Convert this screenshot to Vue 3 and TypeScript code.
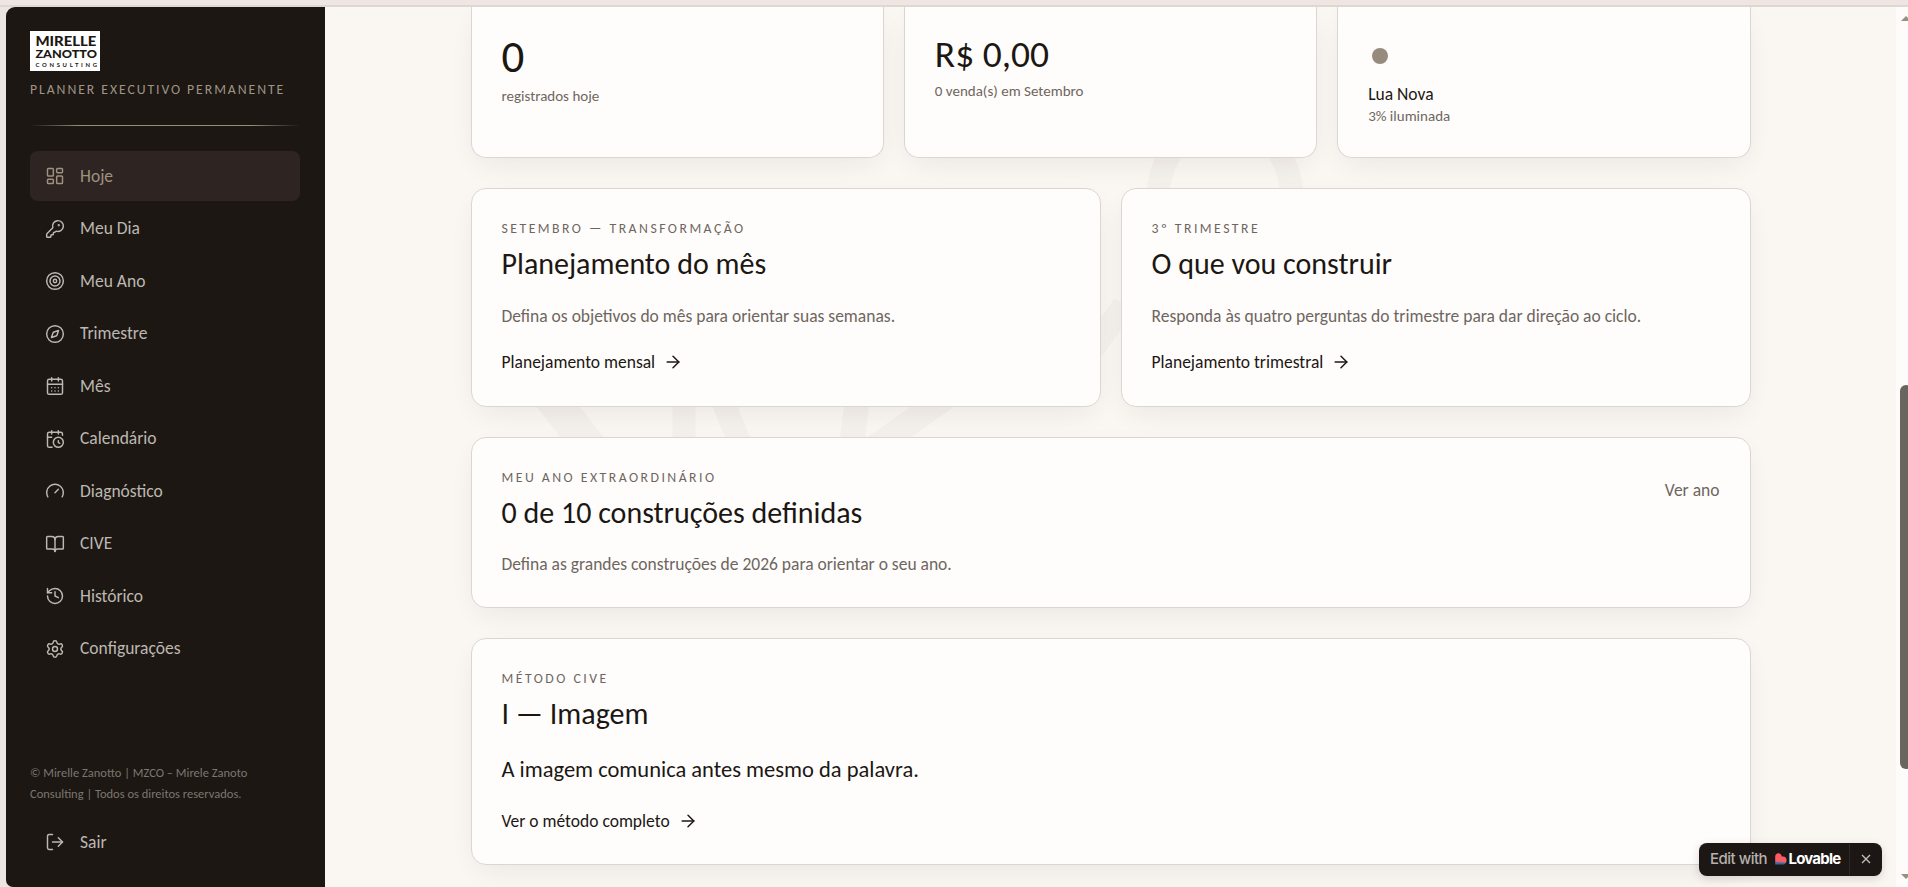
<script setup lang="ts">
interface NavItem {
  label: string
  icon: string
  active?: boolean
}

interface Plan {
  eyebrow: string
  title: string
  text: string
  link: string
}

const icons: Record<string, string> = {
  dashboard:
    '<rect width="7" height="9" x="3" y="3" rx="1"/><rect width="7" height="5" x="14" y="3" rx="1"/><rect width="7" height="9" x="14" y="12" rx="1"/><rect width="7" height="5" x="3" y="16" rx="1"/>',
  key: '<path d="M2.586 17.414A2 2 0 0 0 2 18.828V21a1 1 0 0 0 1 1h3a1 1 0 0 0 1-1v-1a1 1 0 0 1 1-1h1a1 1 0 0 0 1-1v-1a1 1 0 0 1 1-1h.172a2 2 0 0 0 1.414-.586l.814-.814a6.5 6.5 0 1 0-4-4z"/><circle cx="16.5" cy="7.5" r=".5" fill="currentColor"/>',
  target: '<circle cx="12" cy="12" r="10"/><circle cx="12" cy="12" r="6"/><circle cx="12" cy="12" r="2"/>',
  compass:
    '<path d="m16.24 7.76-1.804 5.411a2 2 0 0 1-1.265 1.265L7.76 16.24l1.804-5.411a2 2 0 0 1 1.265-1.265z"/><circle cx="12" cy="12" r="10"/>',
  calendar:
    '<path d="M8 2v4"/><path d="M16 2v4"/><rect width="18" height="18" x="3" y="4" rx="2"/><path d="M3 10h18"/><path d="M8 14h.01"/><path d="M12 14h.01"/><path d="M16 14h.01"/><path d="M8 18h.01"/><path d="M12 18h.01"/><path d="M16 18h.01"/>',
  calendarClock:
    '<path d="M16 14v2.2l1.6 1"/><path d="M16 2v4"/><path d="M21 7.5V6a2 2 0 0 0-2-2H5a2 2 0 0 0-2 2v14a2 2 0 0 0 2 2h3.5"/><path d="M3 10h5"/><path d="M8 2v4"/><circle cx="16" cy="16" r="6"/>',
  gauge: '<path d="m12 14 4-4"/><path d="M3.34 19a10 10 0 1 1 17.32 0"/>',
  book: '<path d="M12 7v14"/><path d="M3 18a1 1 0 0 1-1-1V4a1 1 0 0 1 1-1h5a4 4 0 0 1 4 4 4 4 0 0 1 4-4h5a1 1 0 0 1 1 1v13a1 1 0 0 1-1 1h-6a3 3 0 0 0-3 3 3 3 0 0 0-3-3z"/>',
  history: '<path d="M3 12a9 9 0 1 0 9-9 9.75 9.75 0 0 0-6.74 2.74L3 8"/><path d="M3 3v5h5"/><path d="M12 7v5l4 2"/>',
  settings:
    '<path d="M9.671 4.136a2.34 2.34 0 0 1 4.659 0 2.34 2.34 0 0 0 3.319 1.915 2.34 2.34 0 0 1 2.33 4.033 2.34 2.34 0 0 0 0 3.831 2.34 2.34 0 0 1-2.33 4.033 2.34 2.34 0 0 0-3.319 1.915 2.34 2.34 0 0 1-4.659 0 2.34 2.34 0 0 0-3.32-1.915 2.34 2.34 0 0 1-2.33-4.033 2.34 2.34 0 0 0 0-3.831A2.34 2.34 0 0 1 6.35 6.051a2.34 2.34 0 0 0 3.319-1.915"/><circle cx="12" cy="12" r="3"/>',
  logout: '<path d="m16 17 5-5-5-5"/><path d="M21 12H9"/><path d="M9 21H5a2 2 0 0 1-2-2V5a2 2 0 0 1 2-2h4"/>',
  arrow: '<path d="M5 12h14"/><path d="m12 5 7 7-7 7"/>',
}

const nav: NavItem[] = [
  { label: 'Hoje', icon: 'dashboard', active: true },
  { label: 'Meu Dia', icon: 'key' },
  { label: 'Meu Ano', icon: 'target' },
  { label: 'Trimestre', icon: 'compass' },
  { label: 'Mês', icon: 'calendar' },
  { label: 'Calendário', icon: 'calendarClock' },
  { label: 'Diagnóstico', icon: 'gauge' },
  { label: 'CIVE', icon: 'book' },
  { label: 'Histórico', icon: 'history' },
  { label: 'Configurações', icon: 'settings' },
]

const plans: Plan[] = [
  {
    eyebrow: 'Setembro — Transformação',
    title: 'Planejamento do mês',
    text: 'Defina os objetivos do mês para orientar suas semanas.',
    link: 'Planejamento mensal',
  },
  {
    eyebrow: '3º Trimestre',
    title: 'O que vou construir',
    text: 'Responda às quatro perguntas do trimestre para dar direção ao ciclo.',
    link: 'Planejamento trimestral',
  },
]
</script>

<template>
  <div class="window">
    <aside class="sidebar">
      <svg class="logo" width="70" height="40" viewBox="0 0 70 40" role="img" aria-label="Mirelle Zanotto Consulting">
        <rect width="70" height="40" fill="#fff" />
        <text x="5.4" y="15" font-size="12.6" textLength="61" lengthAdjust="spacingAndGlyphs">MIRELLE</text>
        <text x="5.4" y="27" font-size="12" textLength="61.6" lengthAdjust="spacingAndGlyphs">ZANOTTO</text>
        <text x="5.6" y="36" font-size="5.9" textLength="61.4" class="thin">CONSULTING</text>
      </svg>
      <p class="tagline">Planner Executivo Permanente</p>
      <div class="divider"></div>
      <nav class="nav">
        <a v-for="item in nav" :key="item.label" class="nav-item" :class="{ active: item.active }">
          <svg class="icon" viewBox="0 0 24 24" v-html="icons[item.icon]"></svg>
          <span>{{ item.label }}</span>
        </a>
      </nav>
      <footer class="side-foot">
        <p class="copyright">
          © Mirelle Zanotto | MZCO – Mirele Zanoto<br />Consulting | Todos os direitos reservados.
        </p>
        <a class="nav-item logout">
          <svg class="icon" viewBox="0 0 24 24" v-html="icons.logout"></svg>
          <span>Sair</span>
        </a>
      </footer>
    </aside>

    <main class="main">
      <svg class="watermark" width="1571" height="880" viewBox="325 7 1571 880" aria-hidden="true">
        <g fill="none" stroke="#f4f0ec" stroke-width="23">
          <ellipse cx="1225" cy="200" rx="67" ry="80" />
          <path d="M549 395 L592 450" stroke-width="34" />
          <path d="M684 400 V445" />
          <path d="M720 395 L743 450" />
          <path d="M858 395 L851 450 M945 398 L868 452" stroke-width="25" />
          <path d="M1124 305 L1092 350" />
        </g>
      </svg>
      <div class="content">
        <section class="row three">
          <article class="card stat count">
            <strong>0</strong>
            <small>registrados hoje</small>
          </article>
          <article class="card stat sales">
            <strong>R$ 0,00</strong>
            <small>0 venda(s) em Setembro</small>
          </article>
          <article class="card stat moon">
            <i class="disc"></i>
            <b>Lua Nova</b>
            <small>3% iluminada</small>
          </article>
        </section>

        <section class="row two">
          <article v-for="plan in plans" :key="plan.title" class="card">
            <p class="eyebrow">{{ plan.eyebrow }}</p>
            <h2>{{ plan.title }}</h2>
            <p class="desc">{{ plan.text }}</p>
            <a class="link">
              {{ plan.link }}
              <svg class="icon" viewBox="0 0 24 24" v-html="icons.arrow"></svg>
            </a>
          </article>
        </section>

        <article class="card year">
          <div>
            <p class="eyebrow">Meu ano extraordinário</p>
            <h2>0 de 10 construções definidas</h2>
            <p class="desc">Defina as grandes construções de 2026 para orientar o seu ano.</p>
          </div>
          <a class="see">Ver ano</a>
        </article>

        <article class="card method">
          <p class="eyebrow">Método CIVE</p>
          <h2>I — Imagem</h2>
          <p class="quote">A imagem comunica antes mesmo da palavra.</p>
          <a class="link">
            Ver o método completo
            <svg class="icon" viewBox="0 0 24 24" v-html="icons.arrow"></svg>
          </a>
        </article>
      </div>
    </main>

    <div class="scrollbar">
      <i class="up"></i>
      <i class="thumb"></i>
      <i class="down"></i>
    </div>

    <div class="badge">
      <span class="edit">Edit with</span>
      <svg class="heart" width="12" height="12" viewBox="0 0 12 12">
        <defs>
          <linearGradient id="heartFill" x1="0.3" y1="0.2" x2="0.25" y2="1">
            <stop offset="0.62" stop-color="#ff5964" />
            <stop offset="0.85" stop-color="#2d6f9e" />
          </linearGradient>
        </defs>
        <path
          d="M3.4 0.3 C5.2 0.3 6.6 1.6 6.7 3.6 H8.2 C10.2 3.6 11.6 5.2 11.6 7.2 C11.6 9.6 10.2 11.6 8 11.6 H0.2 V3.6 C0.2 1.6 1.6 0.3 3.4 0.3 Z"
          fill="url(#heartFill)"
        />
      </svg>
      <b class="brand">Lovable</b>
      <span class="close">
        <svg width="10" height="10" viewBox="0 0 10 10"><path d="M1 1l8 8M9 1l-8 8" /></svg>
      </span>
    </div>
  </div>
</template>

<style>
html,
body {
  margin: 0;
  overflow: hidden;
  background: #efe6e4;
}
</style>

<style scoped>
.window {
  position: relative;
  box-sizing: border-box;
  display: flex;
  width: 1908px;
  height: 887px;
  padding: 7px 0 0 6px;
  overflow: hidden;
  background: linear-gradient(#efe6e4 0 5px, #ddd8d2 5px 7px, #ebe6e1 7px);
  font-family: Calibri, Carlito, Lato, sans-serif;
  color: #1c1713;
}

p,
h2 {
  margin: 0;
  font-weight: 400;
}

.icon {
  flex: none;
  width: 20px;
  height: 20px;
  fill: none;
  stroke: currentColor;
  stroke-width: 1.75;
  stroke-linecap: round;
  stroke-linejoin: round;
}

.sidebar {
  box-sizing: border-box;
  flex: none;
  display: flex;
  flex-direction: column;
  width: 319px;
  height: 880px;
  padding: 24px 25px 20px 24px;
  border-radius: 9px 0 0 7px;
  background: #1c1713;
}

.logo {
  display: block;
  flex: none;
}

.logo text {
  font-family: Lato, sans-serif;
  font-weight: 900;
  fill: #1c1713;
}

.logo .thin {
  font-weight: 700;
}

.tagline {
  margin-top: 9px;
  font-size: 13.75px;
  line-height: 20px;
  letter-spacing: 1.925px;
  text-transform: uppercase;
  white-space: nowrap;
  color: #9f9486;
}

.divider {
  flex: none;
  height: 1px;
  margin-top: 25px;
  background: linear-gradient(90deg, transparent, #978b7b 18%, #978b7b 82%, transparent);
}

.nav {
  display: flex;
  flex-direction: column;
  gap: 2.5px;
  margin-top: 25px;
}

.nav-item {
  display: flex;
  align-items: center;
  gap: 15px;
  height: 50px;
  padding: 0 15px;
  border-radius: 7.5px;
  font-size: 17.5px;
  line-height: 25px;
  color: #bdb8b1;
}

.nav .nav-item span {
  padding-top: 0.8px;
}

.nav-item.active {
  background: #2e2523;
  color: #9f927f;
}

.side-foot {
  margin-top: auto;
}

.copyright {
  font-size: 12.5px;
  line-height: 21px;
  white-space: nowrap;
  color: #7b766f;
}

.logout {
  margin-top: 13px;
}

.main {
  position: relative;
  width: 1571px;
  height: 880px;
  overflow: hidden;
  background: #faf7f2;
}

.watermark {
  position: absolute;
  inset: 0;
}

.content {
  position: relative;
  display: flex;
  flex-direction: column;
  gap: 30px;
  width: 1280px;
  margin: 0 auto;
}

.row {
  display: grid;
  gap: 20px;
}

.three {
  grid-template-columns: repeat(3, 1fr);
}

.two {
  grid-template-columns: repeat(2, 1fr);
}

.card {
  box-sizing: border-box;
  padding: 30px;
  border: 1px solid #dcd6d2;
  border-radius: 15px;
  background: #fefdfc;
  box-shadow: 0 10px 30px -8px rgba(28, 23, 19, 0.09);
}

.stat {
  display: flex;
  flex-direction: column;
  height: 151px;
  padding-top: 0;
  border-top: 0;
  border-radius: 0 0 15px 15px;
}

.stat strong {
  font-weight: 400;
}

.stat small {
  font-size: 15px;
  line-height: 20px;
  color: #6e665e;
}

.count strong {
  margin: 27.4px 0 6.6px;
  font-size: 45px;
  line-height: 45px;
}

.sales strong {
  margin: 29.4px 0 7.6px;
  font-size: 37.5px;
  line-height: 37.5px;
}

.disc {
  width: 16px;
  height: 16px;
  margin: 41px 0 18px 3.5px;
  border-radius: 50%;
  background: #978b7d;
}

.moon b {
  font-size: 17.5px;
  font-weight: 400;
  line-height: 25px;
}

.moon small {
  margin-top: -1px;
}

.eyebrow {
  padding-top: 1px;
  font-size: 13.75px;
  line-height: 18px;
  letter-spacing: 0.18em;
  text-transform: uppercase;
  color: #6e665e;
}

h2 {
  margin-top: 7px;
  font-size: 30px;
  line-height: 37.5px;
}

.desc {
  margin-top: 19.5px;
  font-size: 17.5px;
  line-height: 28px;
  color: #6e665e;
}

.link {
  display: flex;
  align-items: center;
  gap: 8px;
  margin-top: 19.5px;
  font-size: 17.5px;
  line-height: 25px;
}

.two .card {
  height: 219px;
}

.year {
  display: flex;
  justify-content: space-between;
  height: 171px;
}

.year .desc {
  margin-top: 18.5px;
}

.see {
  margin-top: 9.5px;
  font-size: 17.5px;
  line-height: 25px;
  color: #6e665e;
}

.method {
  height: 227px;
}

.method .quote {
  margin-top: 19.5px;
  font-size: 22.5px;
  line-height: 36px;
}

.method .link {
  margin-top: 20.5px;
}

.scrollbar {
  position: relative;
  flex: none;
  width: 12px;
  height: 880px;
  overflow: hidden;
  background: #fdfcfb;
}

.up,
.down,
.thumb {
  position: absolute;
  left: 5px;
  width: 0;
}

.up {
  top: 9px;
  border: 5px solid transparent;
  border-top: 0;
  border-bottom-color: #978f84;
}

.down {
  bottom: 8px;
  border: 5px solid transparent;
  border-bottom: 0;
  border-top-color: #978f84;
}

.thumb {
  left: 4px;
  top: 378px;
  width: 12px;
  height: 384px;
  border-radius: 6px;
  background: #6a665f;
}

.badge {
  position: absolute;
  right: 26px;
  bottom: 11.5px;
  box-sizing: border-box;
  display: flex;
  align-items: center;
  width: 183.5px;
  height: 33px;
  padding-left: 11.5px;
  border-radius: 8px;
  background: #1c1715;
  box-shadow: 0 3px 10px rgba(60, 20, 20, 0.16);
  font-family: Inter, "Liberation Sans", sans-serif;
  font-size: 15px;
  line-height: 20px;
}

.edit {
  width: 57px;
  font-weight: 500;
  letter-spacing: -0.5px;
  white-space: nowrap;
  color: #b5b0aa;
}

.heart {
  margin-left: 8px;
}

.brand {
  width: 51px;
  margin-left: 1.5px;
  font-weight: 700;
  letter-spacing: -0.8px;
  color: #fff;
}

.close {
  display: flex;
  flex: 1;
  align-items: center;
  justify-content: center;
  height: 31px;
  margin-left: 9.5px;
  border-left: 1px solid #2f2927;
}

.close path {
  stroke: #c4c0bb;
  stroke-width: 1.3;
  fill: none;
}
</style>
